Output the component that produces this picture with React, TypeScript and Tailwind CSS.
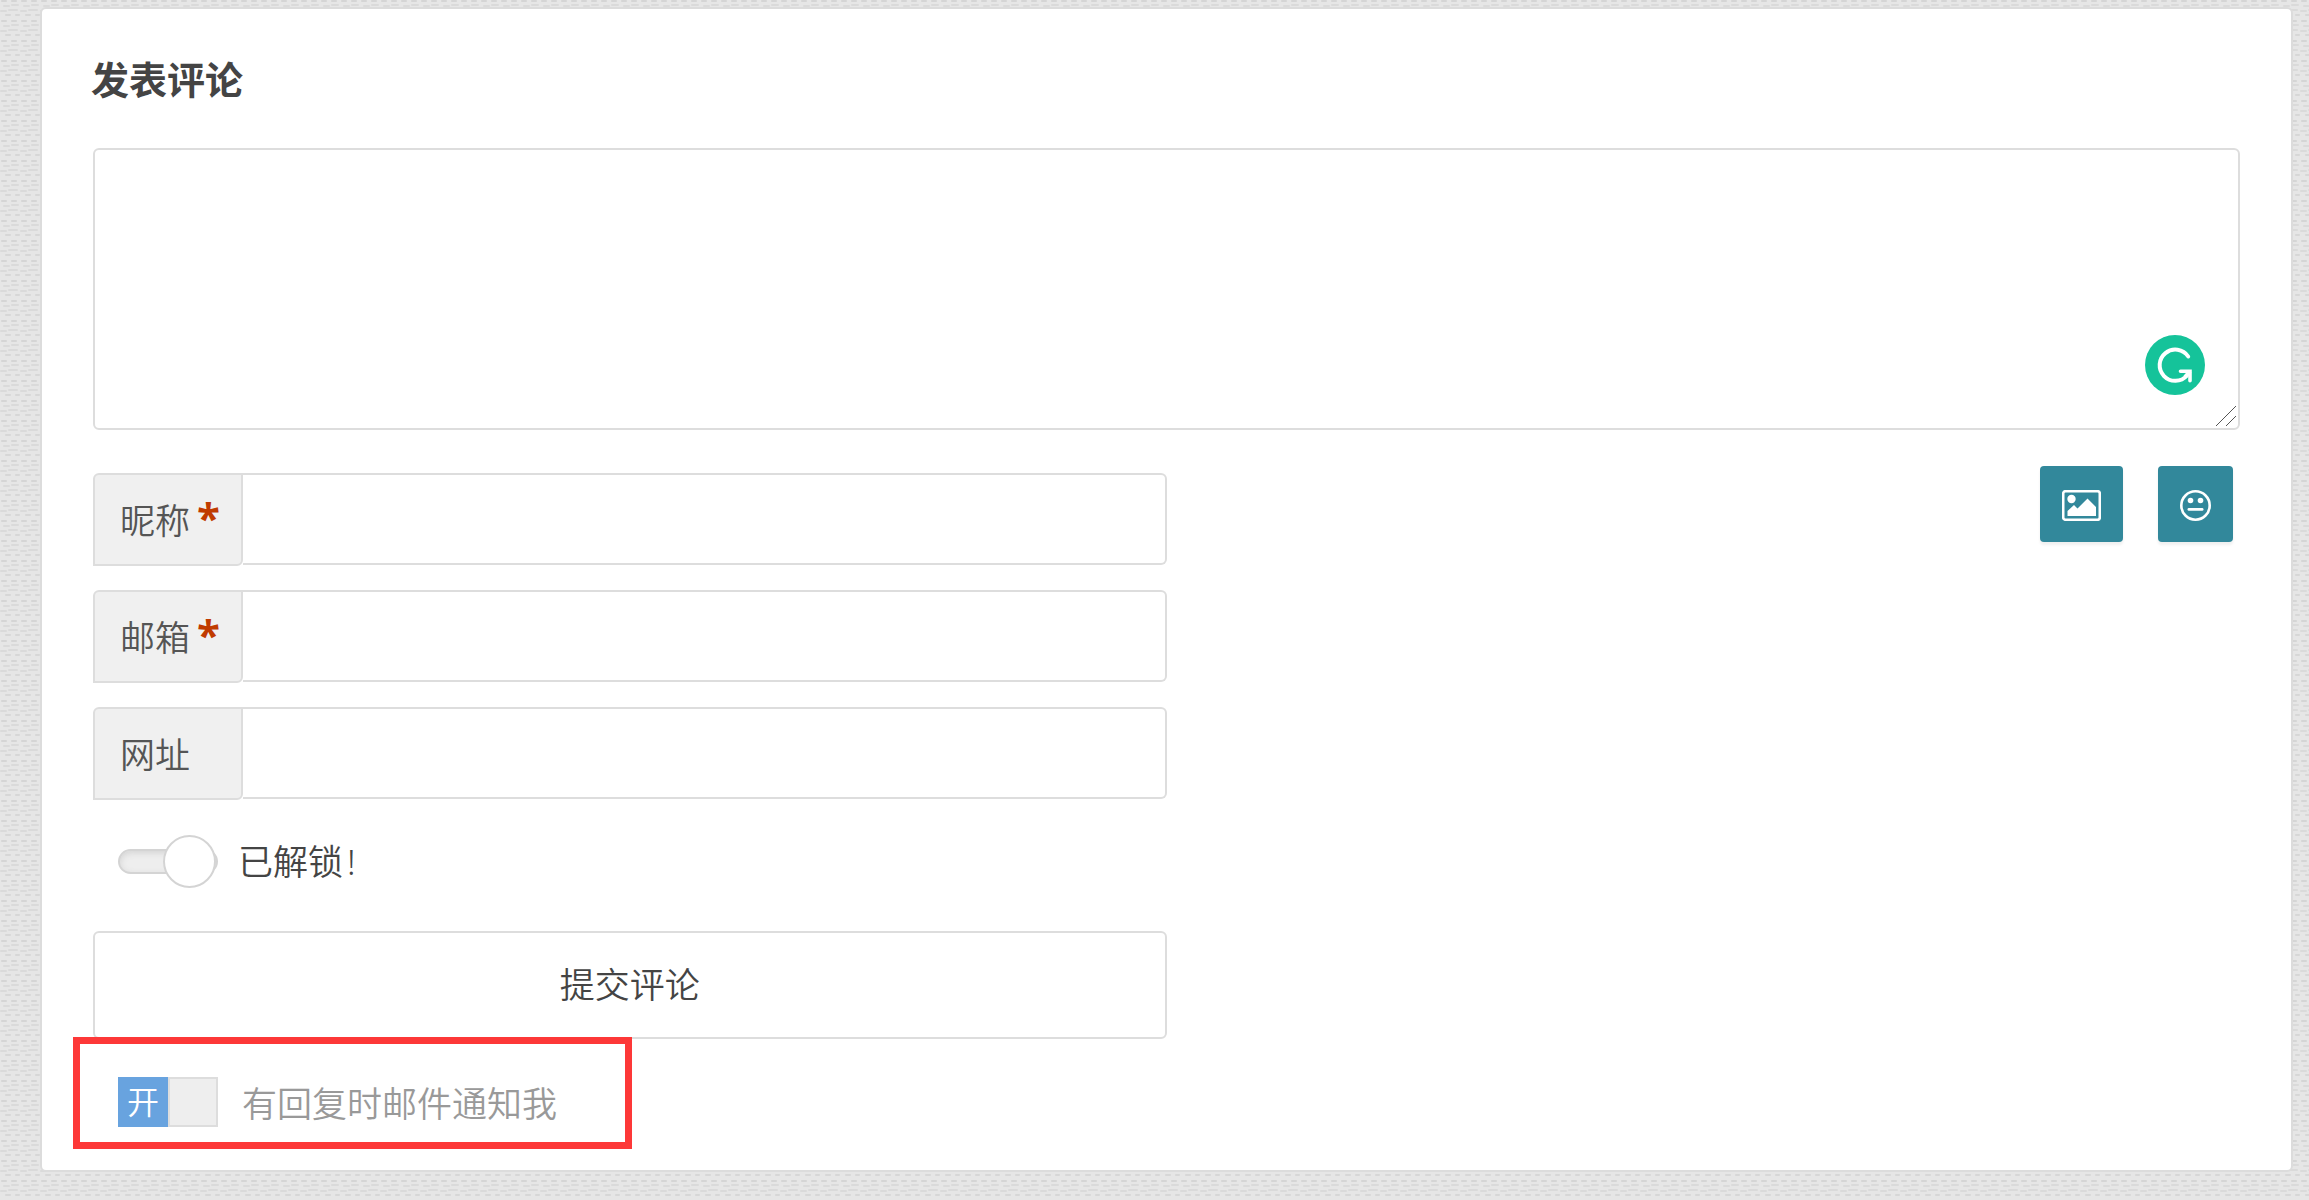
import React, { useState } from 'react';

interface FieldProps {
  id: string;
  label: string;
  type?: string;
  required?: boolean;
}

function Field({ id, label, type = 'text', required = false }: FieldProps) {
  return (
    <div className="flex h-[93px]">
      <label
        htmlFor={id}
        className="flex w-[150px] shrink-0 items-center rounded-tl-md rounded-br-md border-2 border-[#ddd] bg-[#f0f0f0] pt-0.5 pl-[25px] text-[35px] leading-[48px] text-[#555]"
      >
        {label}
        {required && (
          <span className="ml-[7px] pb-2 font-['Open_Sans'] text-[42px] font-bold text-[#c03b00]">*</span>
        )}
      </label>
      <input
        id={id}
        type={type}
        required={required}
        className="mb-px min-w-0 flex-1 rounded-r-md border-2 border-l-0 border-[#ddd] bg-white px-5 text-[35px] text-[#444] outline-none"
      />
    </div>
  );
}

function GrammarBadge() {
  return (
    <svg viewBox="0 0 60 60" className="h-[60px] w-[60px]" fill="none" stroke="#fff">
      <circle cx="30" cy="30" r="30" fill="#15c39a" stroke="none" />
      <path d="M43.2 21.5A15.6 15.6 0 1 0 42 40.5" strokeWidth="4" strokeLinecap="round" />
      <path d="M35.5 36.2H45v9.5" strokeWidth="3.6" strokeLinecap="round" />
      <path d="M45 36.2L40 42" strokeWidth="4" />
    </svg>
  );
}

function ResizeGrip() {
  return (
    <svg viewBox="0 0 20 20" className="h-5 w-5" fill="none" stroke="#555" strokeWidth="1">
      <path d="M0 20L20 0M10 20L20 10" />
    </svg>
  );
}

function PictureIcon() {
  return (
    <svg viewBox="0 0 39 31" className="h-[31px] w-[39px]" fill="#fff">
      <rect x="1.2" y="1.2" width="36.6" height="28.6" rx="2.4" fill="none" stroke="#fff" strokeWidth="2.6" />
      <circle cx="9.5" cy="9" r="4.2" />
      <path d="M5.5 26V21L12 15L15.5 18.5L25.5 8.5L34 17V26Z" />
    </svg>
  );
}

function FaceIcon() {
  return (
    <svg viewBox="0 0 31 31" className="h-[31px] w-[31px]" fill="#fff">
      <circle cx="15.5" cy="15.5" r="14.2" fill="none" stroke="#fff" strokeWidth="2.6" />
      <circle cx="10.5" cy="10.5" r="2.8" />
      <circle cx="20.5" cy="10.5" r="2.8" />
      <rect x="7.5" y="18" width="16" height="2.8" rx="1.4" />
    </svg>
  );
}

// woven texture behind the card
function Texture() {
  return (
    <svg className="absolute inset-0 h-full w-full" aria-hidden="true">
      <defs>
        <pattern id="weave" width="20" height="20" patternUnits="userSpaceOnUse">
          <rect width="20" height="20" fill="#e6e6e6" />
          <g fill="none" strokeWidth="2" strokeLinecap="round">
            <path d="M2 1H6M12 1H16" stroke="#d5d5d5" />
            <path d="M4 6H9M12 5H18" stroke="#dadada" />
            <path d="M1 11H6M9 10H17" stroke="#dadada" />
            <path d="M6 15H10M16 15H19" stroke="#d7d7d7" />
          </g>
        </pattern>
      </defs>
      <rect width="100%" height="100%" fill="url(#weave)" />
    </svg>
  );
}

export default function App() {
  const [comment, setComment] = useState('');
  const [unlocked, setUnlocked] = useState(true);
  const [notify, setNotify] = useState(true);

  return (
    <div className="relative min-h-screen pt-[7px] pr-4 pb-7 pl-10 font-['Noto_Sans','Noto_Sans_CJK_SC',sans-serif] font-[350]">
      <Texture />
      <form
        onSubmit={(e) => e.preventDefault()}
        className="relative rounded-md border-2 border-[#dcdcdc] bg-white px-[51px] pt-11 pb-[21px]"
      >
        <h3 className="-ml-0.5 text-[38px] leading-[52px] font-bold text-[#444]">发表评论</h3>

        <div className="relative mt-[43px]">
          <textarea
            aria-label="发表评论"
            value={comment}
            onChange={(e) => setComment(e.target.value)}
            className="block h-[282px] w-full resize-none rounded-md border-2 border-[#ddd] bg-white p-5 text-[35px] text-[#444] outline-none"
          />
          <div className="pointer-events-none absolute right-[35px] bottom-[35px]">
            <GrammarBadge />
          </div>
          <div className="pointer-events-none absolute right-1 bottom-1">
            <ResizeGrip />
          </div>
        </div>

        <div className="mt-9 flex items-start justify-between">
          <div className="mt-[7px] w-1/2">
            <div className="flex flex-col gap-6">
              <Field id="author" label="昵称" required />
              <Field id="email" label="邮箱" type="email" required />
              <Field id="url" label="网址" type="url" />
            </div>

            <label className="mt-[35px] flex h-[53px] items-center pl-[25px] text-[35px] leading-[48px] text-[#444]">
              <input
                type="checkbox"
                checked={unlocked}
                onChange={(e) => setUnlocked(e.target.checked)}
                className="peer sr-only"
              />
              <span className="flex h-[25px] w-[100px] items-center justify-start rounded-full border-2 border-[#d4d4d4] bg-[#eee] shadow-[inset_0_2px_6px_#d4d4d4] peer-checked:justify-end">
                <span className="h-[53px] w-[53px] shrink-0 rounded-full border-2 border-[#d4d4d4] bg-white" />
              </span>
              <span className="ml-5">已解锁</span>
              <span className="ml-1">!</span>
            </label>

            <button
              type="submit"
              className="mt-[43px] h-[108px] w-full rounded-md border-2 border-[#ddd] bg-white text-[35px] leading-[48px] text-[#444]"
            >
              提交评论
            </button>
          </div>

          <div className="mr-[7px] flex gap-[35px]">
            <button
              type="button"
              aria-label="图片"
              className="flex h-[76px] w-[83px] items-center justify-center rounded bg-[#32889b] pt-0.5 shadow-[0_3px_3px_#f0f0f0]"
            >
              <PictureIcon />
            </button>
            <button
              type="button"
              aria-label="表情"
              className="flex h-[76px] w-[75px] items-center justify-center rounded bg-[#32889b] pt-0.5 shadow-[0_3px_3px_#f0f0f0]"
            >
              <FaceIcon />
            </button>
          </div>
        </div>

        <div className="relative -mt-0.5 -ml-5 flex h-[112px] w-[559px] items-start border-[7px] border-[#fd3838] pt-8 pl-[38px]">
          <label className="flex items-center text-[35px] leading-[48px] text-[#999]">
            <input
              type="checkbox"
              checked={notify}
              onChange={(e) => setNotify(e.target.checked)}
              className="sr-only"
            />
            <span className="flex h-[50px] w-[100px] bg-[#eee] text-[32px] text-white">
              <span className="flex w-[50px] items-center justify-center bg-[#68a3df]">
                {notify ? '开' : '关'}
              </span>
              <span className="flex-1 border-2 border-[#ddd]" />
            </span>
            <span className="ml-6 pt-1">有回复时邮件通知我</span>
          </label>
        </div>
      </form>
    </div>
  );
}
